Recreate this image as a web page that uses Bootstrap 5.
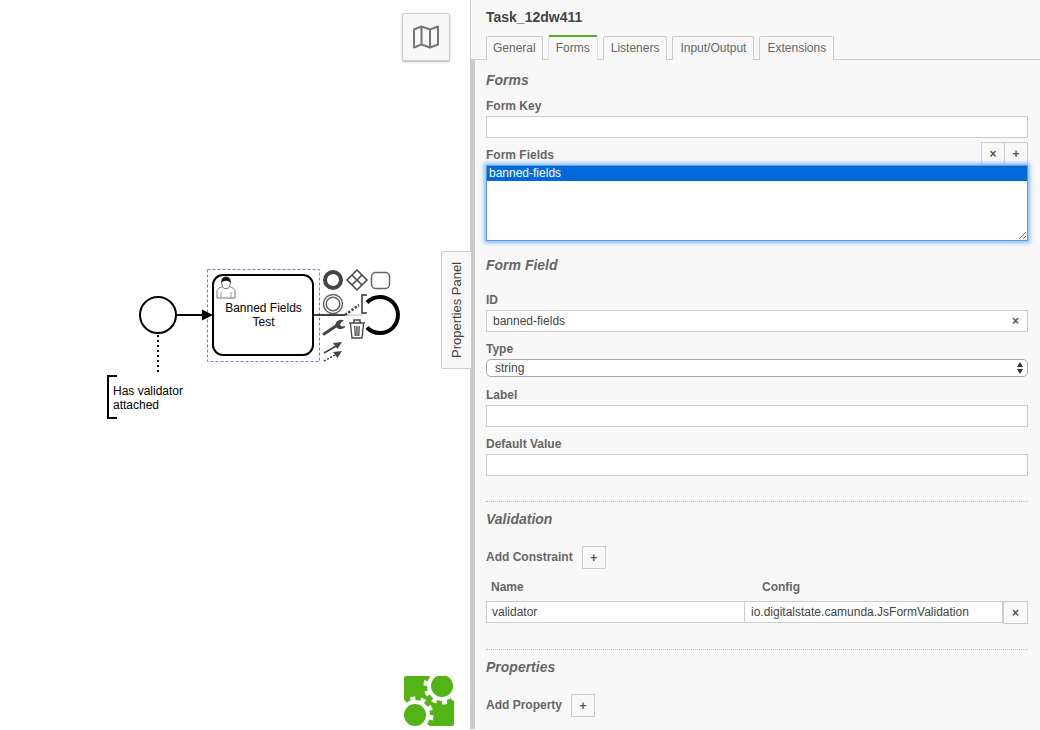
<!DOCTYPE html>
<html lang="en">
<head>
    <meta charset="UTF-8">
    <meta name="viewport" content="width=device-width, initial-scale=1.0">
    <title>Task_12dw411</title>
    <link href="https://cdn.jsdelivr.net/npm/bootstrap@5.3.3/dist/css/bootstrap.min.css" rel="stylesheet">
    <style>
        html, body {
            height: 730px;
            overflow: hidden;
        }
        body {
            background: #fff;
            font-family: "Liberation Sans", Arial, sans-serif;
            font-size: 12px;
            color: #444;
        }
        .modeler {
            width: 1040px;
            height: 730px;
        }
        .canvas-area {
            width: 470px;
            height: 730px;
            flex: none;
        }
        .diagram {
            display: block;
            font-family: "Liberation Sans", Arial, sans-serif;
            font-size: 12px;
        }
        .map-toggle {
            position: absolute;
            left: 402px;
            top: 13px;
            width: 48px;
            height: 48px;
            background: #f8f8f8;
            border: 1px solid #ccc;
            border-radius: 2px;
            box-shadow: 0 1px 2px rgba(0, 0, 0, 0.3);
        }
        .panel-toggle {
            position: absolute;
            left: 441px;
            top: 251px;
            width: 30px;
            height: 118px;
            background: #f8f8f8;
            border: 1px solid #ccc;
            border-left: 0;
            border-radius: 0 2px 2px 0;
            color: #444;
            font-size: 13px;
            writing-mode: vertical-rl;
            transform: rotate(180deg);
            text-align: center;
            line-height: 30px;
            z-index: 2;
        }
        .logo-mark {
            position: absolute;
            left: 404px;
            top: 676px;
        }
        .props-panel {
            width: 570px;
            height: 730px;
            flex: none;
            background: #f8f8f8;
        }
        .props-header {
            height: 60px;
            padding: 9px 0 0 15px;
            border-left: 1px solid #ccc;
        }
        .task-title {
            font-size: 14px;
            font-weight: 700;
            line-height: 16px;
            color: #444;
            margin: 0 0 10px;
        }
        .props-tabs {
            gap: 5px;
            border: 0;
            height: 25px;
            align-items: flex-end;
        }
        .props-tabs .nav-link {
            height: 24px;
            margin: 0;
            padding: 0 7px;
            line-height: 22px;
            font-size: 12px;
            color: #666;
            background: #f8f8f8;
            border: 1px solid #ccc;
            border-bottom: 0;
            border-radius: 2px 2px 0 0;
        }
        .props-tabs .nav-item:first-child .nav-link {
            padding: 0 6px;
        }
        .props-tabs .nav-link.active {
            height: 25px;
            color: #666;
            background: #f8f8f8;
            border-top: 2px solid #52b415;
        }
        .props-body {
            height: 670px;
            padding: 12px 12px 0 11px;
            border-left: 5px solid #ccc;
            border-top: 1px solid #ccc;
            margin-top: -1px;
        }
        .group-title {
            font-size: 14px;
            font-weight: 700;
            font-style: italic;
            line-height: 16px;
            color: #666;
            margin: 0;
        }
        .prop-label {
            display: block;
            font-size: 12px;
            font-weight: 700;
            line-height: 14px;
            color: #666;
            margin: 0 0 3px;
            padding-top: 1px;
        }
        .prop-input {
            display: block;
            width: 100%;
            height: 22px;
            min-height: 22px;
            padding: 0 6px;
            font-size: 12px;
            line-height: 20px;
            color: #444;
            background-color: #fff;
            border: 1px solid #ccc;
            border-radius: 0;
        }
        .prop-select {
            height: 18px;
            min-height: 18px;
            padding: 0 20px 0 8px;
            line-height: 16px;
            font-size: 12px;
            color: #444;
            background-color: #fff;
            background-position: right 3px center;
            background-size: 8px 14px;
            background-image: url("data:image/svg+xml,%3csvg xmlns='http://www.w3.org/2000/svg' viewBox='0 0 8 14'%3e%3cpath fill='%23333' d='M4 1 7 6H1zM4 13 1 8h6z'/%3e%3c/svg%3e");
            border: 1px solid #aaa;
            border-radius: 5px;
        }
        .mini-btn {
            width: 24px;
            height: 23px;
            padding: 0;
            font-size: 12px;
            font-weight: 700;
            line-height: 20px;
            color: #555;
            background: #f8f8f8;
            border: 1px solid #ccc;
            border-radius: 0;
        }
        .form-key { margin-top: 10px; }
        .fields-head {
            height: 23px;
            margin-top: 4px;
        }
        .fields-head .prop-label { margin: 0; padding-top: 2px; }
        .fields-head .mini-btn + .mini-btn { margin-left: -1px; }
        .fields-list {
            height: 76px;
            border: 1px solid #5a9ee6;
            border-radius: 0;
            box-shadow: 0 0 4px 2px #8abcf2;
            background: #fff;
        }
        .fields-list .list-group-item {
            height: 15px;
            padding: 0 2px;
            font-size: 12px;
            line-height: 15px;
            color: #fff;
            background: #0069d9;
            border: 0;
            border-radius: 0;
        }
        .resize-grip {
            position: absolute;
            right: 1px;
            bottom: 1px;
        }
        .field-title { margin-top: 16px; }
        .field-id { margin-top: 19px; }
        .prop-field { margin-top: 9px; }
        .prop-field-wide { margin-top: 10px; }
        .input-clear {
            position: absolute;
            right: 9px;
            top: 18px;
            line-height: 22px;
            font-size: 12px;
            font-weight: 700;
            color: #555;
        }
        .dotted-rule {
            height: 0;
            margin: 0;
            border: 0;
            border-top: 1px dotted #bbb;
            opacity: 1;
        }
        .rule-one { margin-top: 25px; }
        .rule-two { margin-top: 26px; }
        .rule-title { margin-top: 9px; }
        .add-row {
            height: 23px;
            margin-top: 19px;
        }
        .add-row .prop-label { margin: 0 9px 1px 0; padding: 0; }
        .table-head {
            height: 14px;
            margin-top: 11px;
            padding-left: 5px;
        }
        .table-head .prop-label { margin: 0; padding: 0; }
        .head-name { width: 271px; }
        .table-row {
            height: 22px;
            margin-top: 7px;
        }
        .table-row .prop-input { flex: none; }
        .cell-name { width: 259px; padding-left: 5px; }
        .cell-config { width: 259px; margin-left: -1px; }
        .table-row .mini-btn { margin-left: 0; flex: none; width: 25px; }
    </style>
</head>
<body>
    <div class="modeler d-flex">
        <!-- Diagram canvas -->
        <div class="canvas-area position-relative">
            <svg class="diagram" width="470" height="730" viewBox="0 0 470 730">
                <circle cx="158" cy="315" r="18" fill="#fff" stroke="#000" stroke-width="2"/>
                <path d="M176 315H204" stroke="#000" stroke-width="2" fill="none"/>
                <path d="M158 335V374" stroke="#000" stroke-width="2" stroke-dasharray="2 3" fill="none"/>
                <path d="M117 376H108V418H117" stroke="#000" stroke-width="2" fill="none"/>
                <text x="113" y="395" fill="#000">Has validator</text>
                <text x="113" y="409" fill="#000">attached</text>

                <rect x="207.500" y="269.500" width="112" height="92" fill="none" stroke="#7878e0" stroke-dasharray="3 2"/>
                <path d="M313 315H345" stroke="#000" stroke-width="1.500" fill="none"/>
                <path d="M345 315H363" stroke="#bbb" stroke-width="1" fill="none"/>
                <rect x="213" y="275" width="100" height="80" rx="10" fill="#fff" stroke="#000" stroke-width="2"/>
                <path d="M202 309.500 213 315 202 320.500Z" fill="#000"/>
                <text x="263.500" y="312" fill="#000" text-anchor="middle">Banned Fields</text>
                <text x="263.500" y="326" fill="#000" text-anchor="middle">Test</text>

                <!-- user task marker -->
                <path d="M217 298V291.500C217 288.500 220 287.500 223 286.500H229C232 287.500 235 288.500 235 291.500V298Z" fill="#fff" stroke="#777" stroke-width="1"/>
                <path d="M221 298V292M231 298V292" stroke="#999" stroke-width="1" fill="none"/>
                <path d="M221.500 282C221.500 278 223.500 277 226 277C228.500 277 230.500 278 230.500 282L229.500 287C228 289 224 289 222.500 287Z" fill="#fff" stroke="#777" stroke-width="1"/>
                <path d="M221.500 283C221.500 277.500 223.500 277 226 277C228.500 277 230.500 278 230.500 283C229 281 227 280.500 225 281C223.500 281 222.500 281.500 221.500 283Z" fill="#111"/>

                <!-- end event, partly behind the context pad -->
                <path d="M367 302.500A18 18 0 1 1 367 327.500" fill="none" stroke="#000" stroke-width="4"/>

                <!-- context pad -->
                <circle cx="333" cy="280" r="8" fill="none" stroke="#444" stroke-width="4"/>
                <path d="M357 270 367 280 357 290 347 280Z" fill="none" stroke="#444" stroke-width="1.500"/>
                <path d="M352 275 362 285M362 275 352 285" fill="none" stroke="#444" stroke-width="1.500"/>
                <rect x="371.500" y="272.500" width="18" height="16" rx="4" fill="none" stroke="#666" stroke-width="1.500"/>
                <circle cx="333" cy="304" r="9.500" fill="none" stroke="#666" stroke-width="1.500"/>
                <circle cx="333" cy="304" r="6.800" fill="none" stroke="#666" stroke-width="1.500"/>
                <path d="M345 315 359 305" stroke="#444" stroke-width="2.500" stroke-dasharray="2.500 1.500" fill="none"/>
                <path d="M367 295H362V313H367" fill="none" stroke="#333" stroke-width="1.500"/>
                <path d="M324 334 336 326" stroke="#444" stroke-width="3" stroke-linecap="round" fill="none"/>
                <path d="M344 320.500C341 319 337 320 335.500 323.500C335 327 338 329.500 341.500 329C343.500 328.500 345 327.500 345.500 326L341.500 326.500L340 324.500L341.500 322Z" fill="#444"/>
                <path d="M349 323H365M354 323V320H360V323" fill="none" stroke="#444" stroke-width="1.500"/>
                <path d="M350.500 324 352 338H362L363.500 324M354.800 326 355.300 336M357 326V336M359.200 326 358.700 336" fill="none" stroke="#444" stroke-width="1.300"/>
                <path d="M324 353 338 345" stroke="#444" stroke-width="1.500" fill="none"/>
                <path d="M342 342 333 343 337.500 349Z" fill="#444"/>
                <path d="M324 361 338 353.500" stroke="#444" stroke-width="1.500" stroke-dasharray="2 1.500" fill="none"/>
                <path d="M342 351 333 352 337.500 358Z" fill="#444"/>
            </svg>

            <button type="button" class="map-toggle d-flex align-items-center justify-content-center" aria-label="Toggle minimap">
                <svg width="28" height="24" viewBox="0 0 28 24">
                    <path d="M2 4.500 9.500 1.500 18 4.500 26 1.500V19.500L18 22.500 9.500 19.500 2 22.500ZM9.500 1.500V19.500M18 4.500V22.500" fill="none" stroke="#777" stroke-width="2" stroke-linejoin="round"/>
                </svg>
            </button>

            <div class="panel-toggle">Properties Panel</div>

            <!-- green logo: two gears cut out of a square -->
            <svg class="logo-mark" width="50" height="50" viewBox="0 0 50 50">
                <rect width="50" height="50" rx="2" fill="#52b415"/>
                <rect x="38" y="0" width="12" height="21" fill="#fff"/>
                <rect x="30" y="0" width="20" height="10" fill="#fff"/>
                <circle cx="38" cy="10" r="15" fill="#fff"/>
                <circle cx="38" cy="10" r="16.500" fill="none" stroke="#fff" stroke-width="4" stroke-dasharray="5 5.370"/>
                <rect x="0" y="39" width="20" height="11" fill="#fff"/>
                <rect x="0" y="29" width="11" height="21" fill="#fff"/>
                <circle cx="11" cy="39" r="15" fill="#fff"/>
                <circle cx="11" cy="39" r="16.500" fill="none" stroke="#fff" stroke-width="4" stroke-dasharray="5 5.370"/>
                <circle cx="38" cy="10" r="11" fill="#52b415"/>
                <circle cx="11" cy="39" r="11" fill="#52b415"/>
            </svg>
        </div>

        <!-- Properties panel -->
        <div class="props-panel">
            <div class="props-header">
                <h1 class="task-title">Task_12dw411</h1>
                <ul class="nav nav-tabs props-tabs">
                    <li class="nav-item"><a class="nav-link" href="#">General</a></li>
                    <li class="nav-item"><a class="nav-link active" href="#">Forms</a></li>
                    <li class="nav-item"><a class="nav-link" href="#">Listeners</a></li>
                    <li class="nav-item"><a class="nav-link" href="#">Input/Output</a></li>
                    <li class="nav-item"><a class="nav-link" href="#">Extensions</a></li>
                </ul>
            </div>
            <div class="props-body">
                <h2 class="group-title">Forms</h2>
                <div class="form-key">
                    <label class="prop-label">Form Key</label>
                    <input type="text" class="form-control prop-input">
                </div>
                <div class="fields-head d-flex align-items-center">
                    <label class="prop-label me-auto">Form Fields</label>
                    <button type="button" class="btn mini-btn">×</button>
                    <button type="button" class="btn mini-btn">+</button>
                </div>
                <div class="position-relative">
                    <div class="list-group fields-list">
                        <div class="list-group-item">banned-fields</div>
                    </div>
                    <svg class="resize-grip" width="9" height="9" viewBox="0 0 9 9">
                        <path d="M1 8 8 1M5 8 8 5" stroke="#777" stroke-width="1" fill="none"/>
                    </svg>
                </div>

                <h2 class="group-title field-title">Form Field</h2>
                <div class="field-id position-relative">
                    <label class="prop-label">ID</label>
                    <input type="text" class="form-control prop-input" value="banned-fields">
                    <span class="input-clear">×</span>
                </div>
                <div class="prop-field">
                    <label class="prop-label">Type</label>
                    <select class="form-select prop-select">
                        <option>string</option>
                    </select>
                </div>
                <div class="prop-field-wide">
                    <label class="prop-label">Label</label>
                    <input type="text" class="form-control prop-input">
                </div>
                <div class="prop-field">
                    <label class="prop-label">Default Value</label>
                    <input type="text" class="form-control prop-input">
                </div>

                <hr class="dotted-rule rule-one">
                <h2 class="group-title rule-title">Validation</h2>
                <div class="add-row d-flex align-items-center">
                    <label class="prop-label">Add Constraint</label>
                    <button type="button" class="btn mini-btn">+</button>
                </div>
                <div class="table-head d-flex">
                    <label class="prop-label head-name">Name</label>
                    <label class="prop-label">Config</label>
                </div>
                <div class="table-row d-flex">
                    <input type="text" class="form-control prop-input cell-name" value="validator">
                    <input type="text" class="form-control prop-input cell-config" value="io.digitalstate.camunda.JsFormValidation">
                    <button type="button" class="btn mini-btn">×</button>
                </div>

                <hr class="dotted-rule rule-two">
                <h2 class="group-title rule-title">Properties</h2>
                <div class="add-row d-flex align-items-center">
                    <label class="prop-label">Add Property</label>
                    <button type="button" class="btn mini-btn">+</button>
                </div>
            </div>
        </div>
    </div>

    <script src="https://cdn.jsdelivr.net/npm/bootstrap@5.3.3/dist/js/bootstrap.bundle.min.js"></script>
</body>
</html>
